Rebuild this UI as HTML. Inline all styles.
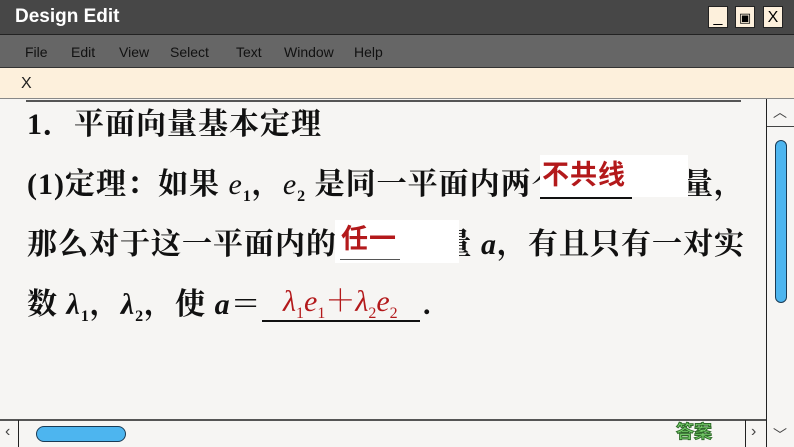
<!DOCTYPE html>
<html><head><meta charset="utf-8"><style>
*{margin:0;padding:0;box-sizing:border-box}
body{width:794px;height:447px;overflow:hidden;background:#f6f5f3;position:relative;font-family:"Liberation Serif","Noto Serif CJK SC","Noto Sans CJK SC",serif}
.a{position:absolute;white-space:nowrap}
#title{left:0;top:0;width:794px;height:35px;background:#474747;border-bottom:1px solid #222}
#menu{left:0;top:35px;width:794px;height:33px;background:#666;border-bottom:1px solid #333}
#bar{left:0;top:68px;width:794px;height:31px;background:#fdf0dc;border-bottom:1px solid #888}
.ui{font-family:"Liberation Sans","DejaVu Sans",sans-serif}
.m{top:44px;font-size:14px;color:#111}
.t{font-size:30px;line-height:30px;letter-spacing:1px;font-weight:bold;color:#111;font-family:"Liberation Serif","Noto Serif CJK SC",serif}
.r{color:#b3191b;font-weight:bold}
.rs{font-family:"Liberation Sans","Noto Sans CJK SC",sans-serif;font-size:27px}
.i{font-style:italic}
.wb{background:#fff}
.ul{height:2px;background:#111}
sub{font-size:16px;line-height:0}
.btn{top:6px;width:20px;height:22px;background:#fdf0dc;border:1px solid #222;font-size:16px;text-align:center;line-height:22px}
</style></head><body>
<div class="a" id="title"></div>
<div class="a ui" style="left:15px;top:6px;font-size:19px;color:#fff;font-weight:bold">Design Edit</div>
<div class="a btn ui" style="left:708px">_</div>
<div class="a btn ui" style="left:735px;font-size:13px">▣</div>
<div class="a btn ui" style="left:763px">X</div>
<div class="a" id="menu"></div>
<div class="a ui m" style="left:25px">File</div>
<div class="a ui m" style="left:71px">Edit</div>
<div class="a ui m" style="left:119px">View</div>
<div class="a ui m" style="left:170px">Select</div>
<div class="a ui m" style="left:236px">Text</div>
<div class="a ui m" style="left:284px">Window</div>
<div class="a ui m" style="left:354px">Help</div>
<div class="a" id="bar"></div>
<div class="a ui" style="left:21px;top:75px;font-size:16px;color:#222">X</div>
<div class="a" style="left:26px;top:100px;width:715px;height:2px;background:#555"></div>

<div class="a" style="left:766px;top:99px;width:1px;height:348px;background:#222"></div>
<div class="a" style="left:767px;top:126px;width:27px;height:1px;background:#444"></div>
<div class="a ui" style="left:773px;top:102px;font-size:14px;color:#444">︿</div>
<div class="a" style="left:775px;top:140px;width:12px;height:163px;background:#4db5ef;border:1px solid #1a3b55;border-radius:6px"></div>

<div class="a" style="left:0;top:419px;width:766px;height:2px;background:#555"></div>
<div class="a" style="left:18px;top:420px;width:1px;height:27px;background:#222"></div>
<div class="a" style="left:745px;top:420px;width:1px;height:27px;background:#222"></div>
<div class="a ui" style="left:5px;top:423px;font-size:16px;color:#444">‹</div>
<div class="a ui" style="left:751px;top:423px;font-size:16px;color:#444">›</div>
<div class="a ui" style="left:773px;top:425px;font-size:14px;color:#444">﹀</div>
<div class="a" style="left:36px;top:426px;width:90px;height:16px;background:#4db5ef;border:1px solid #1a3b55;border-radius:8px"></div>
<div class="a" style="left:676px;top:418px;font-size:18px;font-weight:bold;color:#7ad36d;font-family:'Noto Sans CJK SC',sans-serif;-webkit-text-stroke:1px #2f6b2a">答案</div>

<div class="a t" style="left:27px;top:110px">1．平面向量基本定理</div>

<div class="a t" style="left:27px;top:170px">(1)定理：如果 <span class="i" style="font-weight:normal">e</span><sub>1</sub>，<span class="i" style="font-weight:normal">e</span><sub>2</sub> 是同一平面内两个</div>
<div class="a t" style="right:49px;top:170px">向量，</div>
<div class="a wb" style="left:540px;top:155px;width:148px;height:42px"></div>
<div class="a t r rs" style="left:542px;top:160px">不共线</div>
<div class="a ul" style="left:540px;top:197px;width:92px"></div>

<div class="a t" style="left:27px;top:230px">那么对于这一平面内的</div>
<div class="a t" style="right:49px;top:230px">量 <span class="i">a</span>，有且只有一对实</div>
<div class="a wb" style="left:335px;top:220px;width:124px;height:43px"></div>
<div class="a t r rs" style="left:341px;top:224px">任一</div>
<div class="a" style="left:340px;top:259px;width:60px;height:1px;background:#555"></div>

<div class="a t" style="left:27px;top:290px">数 <span class="i">λ</span><sub>1</sub>，<span class="i">λ</span><sub>2</sub>，使 <span class="i">a</span>＝</div>
<div class="a t r" style="left:283px;top:287px;font-weight:normal;letter-spacing:0"><span class="i">λ</span><sub>1</sub><span class="i">e</span><sub>1</sub>＋<span class="i">λ</span><sub>2</sub><span class="i">e</span><sub>2</sub></div>
<div class="a ul" style="left:262px;top:320px;width:158px"></div>
<div class="a t" style="left:423px;top:290px">.</div>
</body></html>
